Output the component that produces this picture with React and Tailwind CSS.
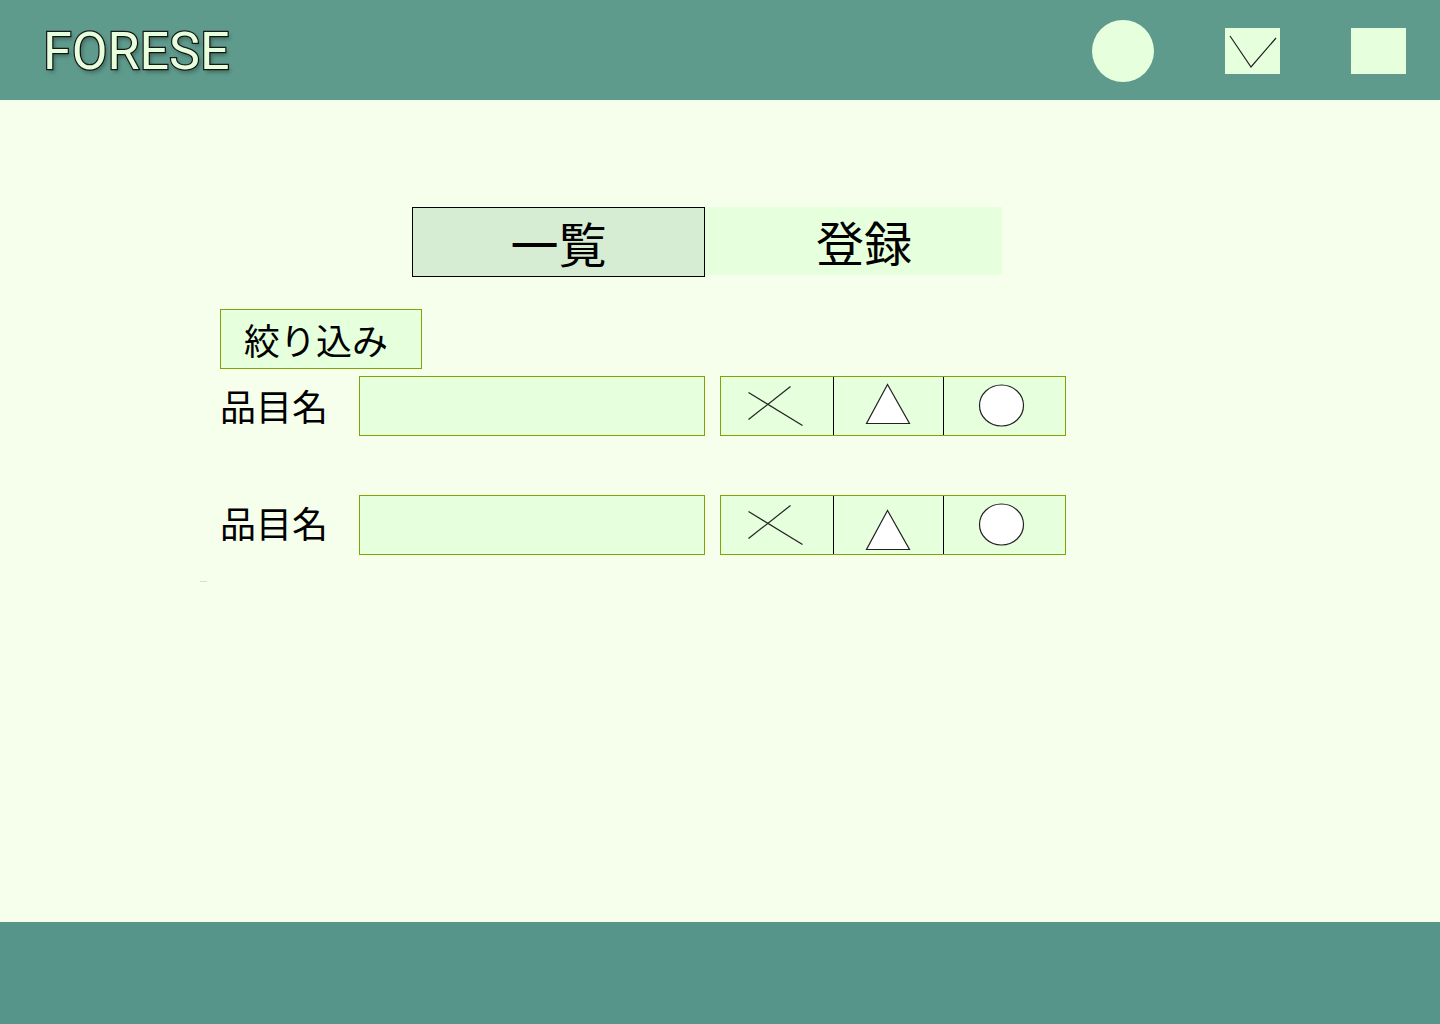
import React from 'react';

const jp = { fontFamily: '"Noto Sans CJK JP", "Noto Sans", sans-serif' };

// three-way choice: × / △ / ○
const ChoiceGroup = ({ triShift = 0 }) => (
  <div className="flex h-[60px] w-[346px] border border-[#7fa600] bg-[#e6ffdc]">
    <div className="relative w-[113px] border-r border-black">
      <svg className="absolute inset-0" width="113" height="58" viewBox="0 0 113 58">
        <line x1="27.5" y1="15.5" x2="81.5" y2="48.5" stroke="#222" strokeWidth="1.2" />
        <line x1="27.5" y1="42.5" x2="69.5" y2="9.5" stroke="#222" strokeWidth="1.2" />
      </svg>
    </div>
    <div className="relative w-[110px] border-r border-black">
      <svg className="absolute inset-0" width="110" height="58" viewBox="0 0 110 58">
        <polygon
          points={`53.5,${7.5 + triShift} 32.5,${46.5 + triShift} 75.5,${46.5 + triShift}`}
          fill="#fff"
          stroke="#222"
          strokeWidth="1.2"
        />
      </svg>
    </div>
    <div className="relative flex-1">
      <svg className="absolute inset-0" width="122" height="58" viewBox="0 0 122 58">
        <ellipse cx="57.5" cy="28.5" rx="22" ry="20.5" fill="#fff" stroke="#222" strokeWidth="1.2" />
      </svg>
    </div>
  </div>
);

const FilterRow = ({ triShift, labelClass }) => (
  <div className="flex items-center">
    <div className={`w-[139px] text-[36px] leading-none text-black ${labelClass}`} style={jp}>
      品目名
    </div>
    <div className="h-[60px] w-[346px] border border-[#7fa600] bg-[#e6ffdc]" />
    <div className="ml-[15px]">
      <ChoiceGroup triShift={triShift} />
    </div>
  </div>
);

export default function App() {
  return (
    <div className="flex h-[1024px] flex-col bg-[#f6ffec]">
      <header className="flex h-[100px] shrink-0 items-center justify-between bg-[#5e9b8c] pl-[43px] pr-[34px] pt-[2px]">
        <h1
          className="mt-[2px] text-[52px] leading-none text-[#e6fedc] [-webkit-text-stroke:2.5px_#1a1a1a] [paint-order:stroke_fill] [text-shadow:2px_3px_4px_rgba(0,0,0,0.35)]"
          style={{ fontFamily: 'Roboto, "Liberation Sans", sans-serif' }}
        >
          FORESE
        </h1>
        <div className="flex items-center gap-[71px]">
          <div className="h-[62px] w-[62px] rounded-full bg-[#e6ffdc]" />
          <div className="h-[46px] w-[55px] bg-[#e6ffdc]">
            <svg width="55" height="46" viewBox="0 0 55 46">
              <polyline points="5,8 26,39 51,10" fill="none" stroke="#222" strokeWidth="1.2" />
            </svg>
          </div>
          <div className="h-[46px] w-[55px] bg-[#e6ffdc]" />
        </div>
      </header>

      <main className="flex-1 pt-[107px]">
        <div className="ml-[412px] flex items-start">
          <button
            className="flex h-[70px] w-[293px] items-center justify-center border border-black bg-[#d6edd4] text-[48px] leading-none text-black"
            style={jp}
          >
            一覧
          </button>
          <button
            className="flex h-[68px] w-[297px] items-center justify-center bg-[#e6ffdc] pl-[21px] text-[48px] leading-none text-black"
            style={jp}
          >
            登録
          </button>
        </div>

        <div className="ml-[220px] mt-[32px] flex flex-col">
          <button
            className="flex h-[60px] w-[202px] items-center border border-[#7fa600] bg-[#e6ffdc] pl-[23px] text-[36px] leading-none text-black"
            style={jp}
          >
            絞り込み
          </button>
          <div className="mt-[7px] flex flex-col gap-[59px]">
            <FilterRow triShift={0} labelClass="-mt-[3px]" />
            <FilterRow triShift={7} labelClass="-mt-[6px]" />
          </div>
          <div className="-ml-[20px] mt-[26px] h-px w-[7px] bg-[#d8ddd4]" />
        </div>
      </main>

      <footer className="h-[102px] shrink-0 bg-[#55958a]" />
    </div>
  );
}
